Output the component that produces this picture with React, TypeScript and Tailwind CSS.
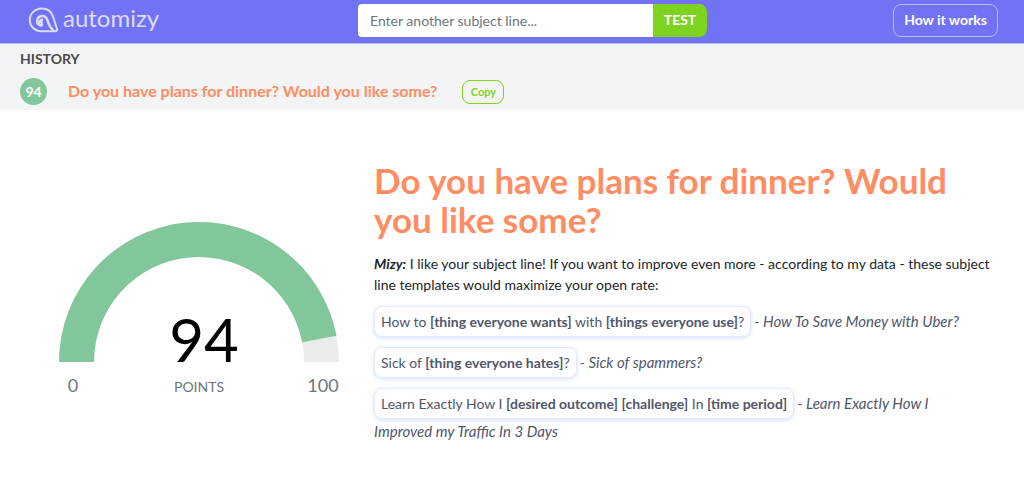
import { useState } from "react";

type Part = { text: string; slot?: boolean };

const subject = "Do you have plans for dinner? Would you like some?";

const templates: { parts: Part[]; example: string }[] = [
  {
    parts: [
      { text: "How to " },
      { text: "[thing everyone wants]", slot: true },
      { text: " with " },
      { text: "[things everyone use]", slot: true },
      { text: "?" },
    ],
    example: "How To Save Money with Uber?",
  },
  {
    parts: [
      { text: "Sick of " },
      { text: "[thing everyone hates]", slot: true },
      { text: "?" },
    ],
    example: "Sick of spammers?",
  },
  {
    parts: [
      { text: "Learn Exactly How I " },
      { text: "[desired outcome]", slot: true },
      { text: " " },
      { text: "[challenge]", slot: true },
      { text: " In " },
      { text: "[time period]", slot: true },
    ],
    example: "Learn Exactly How I Improved my Traffic In 3 Days",
  },
];

function Logo() {
  return (
    <a href="#" className="flex w-[144px] items-center gap-[5px] text-[#dcdcfc]">
      <svg
        viewBox="0 0 30 26"
        className="h-[26px] w-[30px]"
        fill="none"
        stroke="currentColor"
        strokeWidth="2"
        strokeLinecap="round"
        strokeLinejoin="round"
      >
        <path d="M27.6 24.2C28.8 24.2 29.3 23.2 29 22L24.8 9C23 4 18.8 1.6 13.8 1.6C7 1.6 1.8 6.6 1.8 13C1.8 19.2 7 24.2 13.6 24.2Z" />
        <path
          d="M14 18.2C10.8 19 9 16.8 9.2 14C9.4 10.8 11.6 9 14.2 9C17.2 9 18.8 10.8 19.6 13.6C20.8 17.8 22 20.8 25 22.8"
          strokeWidth="2.5"
        />
        <path d="M11 16.6C11.2 14.4 12.2 13 14.2 12.6C13 14.4 13.2 16.2 14.2 18" />
      </svg>
      <span className="pb-1 text-2xl leading-6">automizy</span>
    </a>
  );
}

function Gauge({ value }: { value: number }) {
  const angle = Math.PI * (1 - value / 100);
  const point = (r: number) =>
    `${140 + r * Math.cos(angle)} ${140 - r * Math.sin(angle)}`;

  return (
    <svg
      viewBox="0 0 280 176"
      className="mt-[61px] h-[176px] w-[280px] shrink-0"
      role="img"
      aria-label={`${value} points`}
    >
      <path d="M0 140A140 140 0 0 1 280 140H245A105 105 0 0 0 35 140Z" fill="#ebebeb" />
      <path
        d={`M0 140A140 140 0 0 1 ${point(140)}L${point(105)}A105 105 0 0 0 35 140Z`}
        fill="#82c79b"
      />
      <g textAnchor="middle" fill="#6c757d">
        <text x="145" y="140" fontSize="60" fill="#000">
          {value}
        </text>
        <text x="14" y="170" fontSize="18">0</text>
        <text x="140" y="170" fontSize="14">POINTS</text>
        <text x="264" y="170" fontSize="18">100</text>
      </g>
    </svg>
  );
}

export default function App() {
  const [line, setLine] = useState("");

  return (
    <div className="bg-white font-[Lato,sans-serif] text-sm text-[#212529]">
      <header className="flex h-11 items-center justify-between border-b border-[#b9b9f8] bg-[#7272f4] pr-[26px] pb-[3px] pl-7">
        <Logo />
        <form className="flex" onSubmit={(e) => e.preventDefault()}>
          <input
            type="text"
            aria-label="Subject line"
            placeholder="Enter another subject line..."
            value={line}
            onChange={(e) => setLine(e.target.value)}
            className="h-[33px] w-[295px] rounded-l-[4px] bg-white px-3 text-sm outline-none placeholder:text-[#6c757d]"
          />
          <button
            type="submit"
            className="h-[33px] w-[54px] rounded-r-lg bg-[#7ed321] text-sm font-bold text-white"
          >
            TEST
          </button>
        </form>
        <button
          type="button"
          className="h-[33px] w-[105px] rounded-lg border border-[#b9b9f8] text-sm font-bold text-white"
        >
          How it works
        </button>
      </header>

      <section className="h-[66px] bg-[#f3f4f6] px-5 pt-1">
        <h2 className="text-sm leading-[21px] font-bold text-[#4a4a4a]">HISTORY</h2>
        <div className="mt-[9px] flex items-center">
          <span className="flex size-[27px] items-center justify-center rounded-full bg-[#82c79b] text-sm font-bold text-white">
            94
          </span>
          <span className="ml-[21px] pb-[2px] text-base leading-6 font-bold text-[#ff8c62]">
            {subject}
          </span>
          <button
            type="button"
            className="ml-[25px] h-6 w-[42px] rounded-lg border border-[#7ed321] text-[11px] font-bold text-[#7ed321]"
          >
            Copy
          </button>
        </div>
      </section>

      <main className="flex gap-[35px] pt-[51px] pr-8 pb-9 pl-[59px]">
        <Gauge value={94} />
        <div className="flex-1">
          <h1 className="text-[35px] leading-[39px] font-bold text-[#ff8c62]">{subject}</h1>
          <p className="mt-[14px] mb-[6px] leading-[21px]">
            <b className="italic">Mizy:</b> I like your subject line! If you want to improve even
            more - according to my data - these subject line templates would maximize your open
            rate:
          </p>
          <ul className="pr-3 leading-[15px] text-[#50566b]">
            {templates.map((t) => (
              <li key={t.example}>
                <span className="my-[5px] mr-[3px] inline-block rounded-lg border border-[#e3eaff] bg-white px-[6px] py-1 leading-[21px] shadow-[0_1px_4px_#d5e0ff]">
                  {t.parts.map((p, i) => (p.slot ? <b key={i}>{p.text}</b> : p.text))}
                </span>
                - <i className="text-[15px]">{t.example}</i>
              </li>
            ))}
          </ul>
        </div>
      </main>
    </div>
  );
}
